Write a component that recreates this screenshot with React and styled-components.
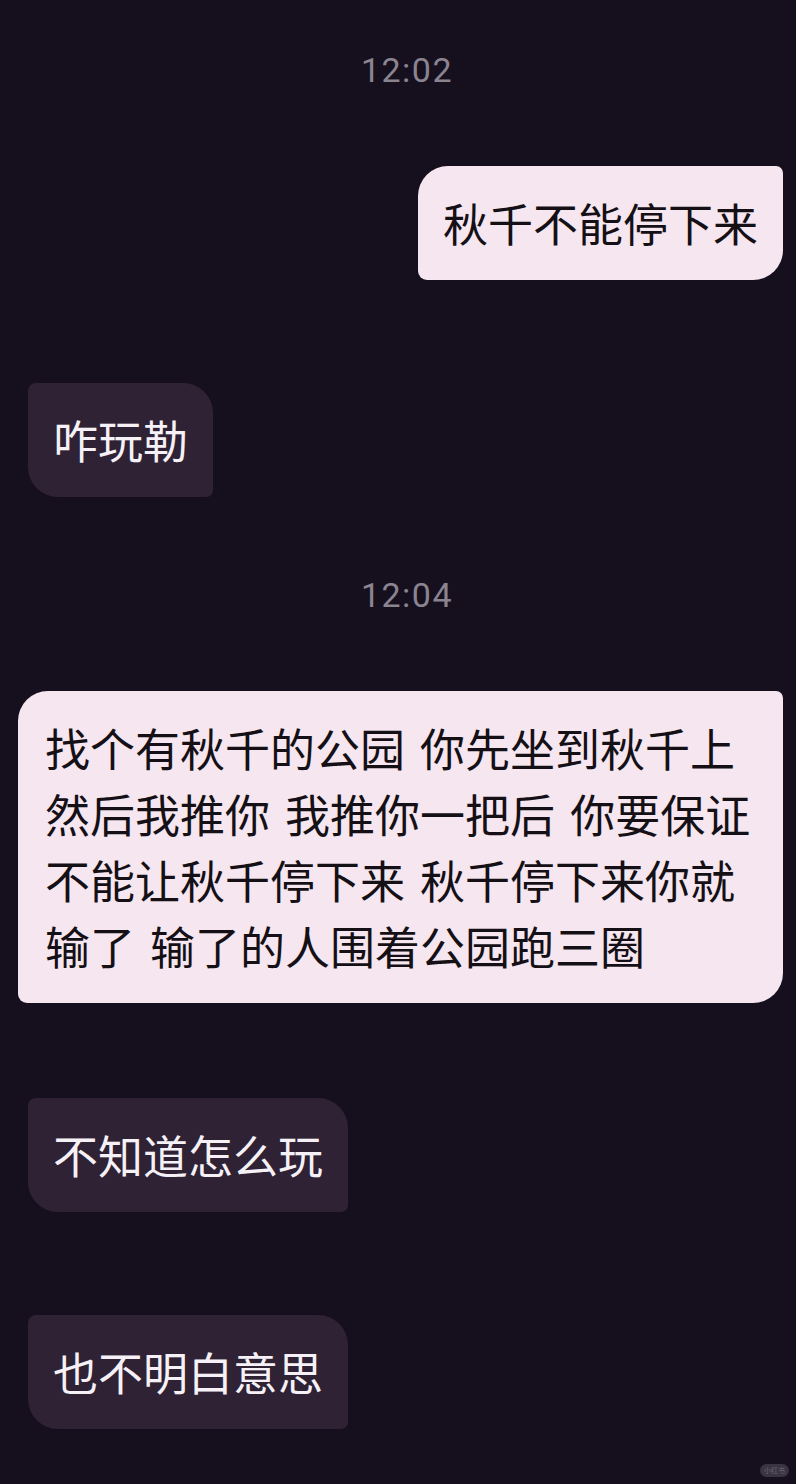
import React from "react";
import styled, { createGlobalStyle } from "styled-components";

const Global = createGlobalStyle`
  html, body { margin: 0; padding: 0; background: #160f1e; }
  body { font-family: "Noto Sans CJK SC", "Noto Sans", sans-serif; }
`;

const Page = styled.div`
  position: relative;
  min-height: 1484px;
  box-sizing: border-box;
  padding: 50px 13px 0 28px;
  background: #160f1e;
  display: flex;
  flex-direction: column;
`;

const Time = styled.div`
  align-self: center;
  margin-left: 3px;
  margin-top: ${(p) => p.$top || 0}px;
  height: 40px;
  line-height: 40px;
  font-family: Roboto, "Liberation Sans", sans-serif;
  font-size: 34px;
  letter-spacing: 1.5px;
  color: #8a8490;
`;

const Bubble = styled.div`
  box-sizing: border-box;
  margin-top: ${(p) => p.$top || 0}px;
  padding: 24px 25px;
  font-size: 45px;
  line-height: 66px;
  white-space: nowrap;
  word-spacing: 5px;
  align-self: ${(p) => (p.$sent ? "flex-end" : "flex-start")};
  background: ${(p) => (p.$sent ? "#f6e6ef" : "#2e2234")};
  color: ${(p) => (p.$sent ? "#141016" : "#f6f1f7")};
  border-radius: ${(p) => (p.$sent ? "30px 7px 30px 9px" : "8px 30px 7px 30px")};
  ${(p) => p.$wide && "width: 765px; padding-left: 27px;"}
`;

const Line = styled.span`
  display: block;
`;

const Watermark = styled.div`
  position: absolute;
  right: 7px;
  bottom: 7px;
  padding: 0 4px;
  height: 13px;
  line-height: 13px;
  border-radius: 7px;
  background: #3a3341;
  color: #6b6472;
  font-size: 7px;
`;

const longLines = [
  "找个有秋千的公园 你先坐到秋千上",
  "然后我推你 我推你一把后 你要保证",
  "不能让秋千停下来 秋千停下来你就",
  "输了 输了的人围着公园跑三圈",
];

export default function App() {
  return (
    <>
      <Global />
      <Page>
        <Time>12:02</Time>
        <Bubble $sent $top={76}>秋千不能停下来</Bubble>
        <Bubble $top={103}>咋玩勒</Bubble>
        <Time $top={78}>12:04</Time>
        <Bubble $sent $wide $top={76}>
          {longLines.map((l) => (
            <Line key={l}>{l}</Line>
          ))}
        </Bubble>
        <Bubble $top={95}>不知道怎么玩</Bubble>
        <Bubble $top={103}>也不明白意思</Bubble>
        <Watermark>小红书</Watermark>
      </Page>
    </>
  );
}
